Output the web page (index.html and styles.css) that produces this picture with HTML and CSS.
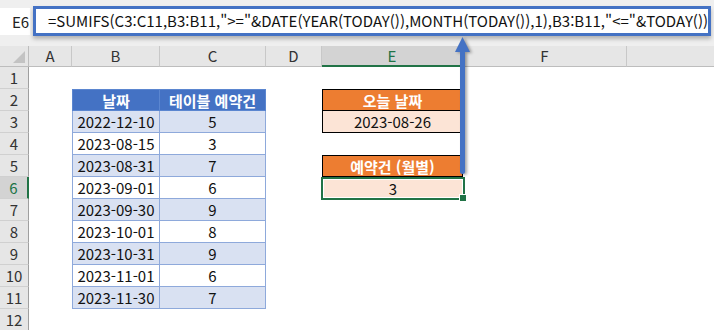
FILE: index.html
```html
<!DOCTYPE html>
<html lang="ko">
<head>
<meta charset="utf-8">
<link rel="stylesheet" href="styles.css">
</head>
<body>
<div class="app">
  <div class="fbar">
    <div class="namebox">E6</div>
    <div class="formula">=SUMIFS(C3:C11,B3:B11,"&gt;="&amp;DATE(YEAR(TODAY()),MONTH(TODAY()),1),B3:B11,"&lt;="&amp;TODAY())</div>
  </div>
  <div class="sheet">
    <div class="corner"></div>
    <div class="ch">A</div><div class="ch">B</div><div class="ch">C</div><div class="ch">D</div><div class="ch sel">E</div><div class="ch">F</div><div class="ch last"></div>

    <div class="rh">1</div><div></div><div></div><div></div><div></div><div></div><div></div><div></div>

    <div class="rh">2</div><div></div><div class="c th first">날짜</div><div class="c th">테이블 예약건</div><div></div><div class="c oh">오늘 날짜</div><div></div><div></div>

    <div class="rh">3</div><div></div><div class="c band first">2022-12-10</div><div class="c band">5</div><div></div><div class="c ov">2023-08-26</div><div></div><div></div>

    <div class="rh">4</div><div></div><div class="c first">2023-08-15</div><div class="c">3</div><div></div><div></div><div></div><div></div>

    <div class="rh">5</div><div></div><div class="c band first">2023-08-31</div><div class="c band">7</div><div></div><div class="c oh">예약건 (월별)</div><div></div><div></div>

    <div class="rh sel">6</div><div></div><div class="c first">2023-09-01</div><div class="c">6</div><div></div><div class="c ov active">3</div><div></div><div></div>

    <div class="rh">7</div><div></div><div class="c band first">2023-09-30</div><div class="c band">9</div><div></div><div></div><div></div><div></div>

    <div class="rh">8</div><div></div><div class="c first">2023-10-01</div><div class="c">8</div><div></div><div></div><div></div><div></div>

    <div class="rh">9</div><div></div><div class="c band first">2023-10-31</div><div class="c band">9</div><div></div><div></div><div></div><div></div>

    <div class="rh">10</div><div></div><div class="c first">2023-11-01</div><div class="c">6</div><div></div><div></div><div></div><div></div>

    <div class="rh">11</div><div></div><div class="c band first">2023-11-30</div><div class="c band">7</div><div></div><div></div><div></div><div></div>

    <div class="rh">12</div><div></div><div></div><div></div><div></div><div></div><div></div><div></div>
  </div>
  <svg class="arrow" width="30" height="150" viewBox="0 0 30 150">
    <rect x="10" y="14" width="5" height="124" rx="2.5" fill="#4472c4"/>
    <polygon points="12.5,1 5,16 20,16" fill="#4472c4"/>
  </svg>
</div>
</body>
</html>
```

FILE: styles.css
```css
* { box-sizing: border-box; }
html, body { margin: 0; padding: 0; background: #fff; }
body {
  width: 714px;
  height: 330px;
  overflow: hidden;
  font-family: "Noto Sans CJK KR", "Noto Sans", sans-serif;
  color: #000;
}
.app { position: relative; width: 714px; height: 330px; overflow: hidden; }

.fbar {
  height: 46px;
  background: #efefef;
  display: flex;
  align-items: flex-start;
  padding-top: 6px;
}
.namebox {
  width: 30px;
  height: 27px;
  margin-top: 2px;
  background: #fff;
  font-size: 15px;
  line-height: 27px;
  padding-left: 12px;
  color: #222;
  white-space: nowrap;
}
.formula {
  margin-left: 3px;
  width: 678px;
  height: 30px;
  border: 3px solid #4472c4;
  background: #fff;
  box-shadow: 0 3px 4px rgba(0,0,0,0.25);
  font-size: 15px;
  line-height: 24px;
  padding-left: 12px;
  white-space: nowrap;
  overflow: hidden;
  color: #111;
  letter-spacing: 0;
}

.sheet {
  display: grid;
  grid-template-columns: 29px 43px 88px 106px 56px 141px 164px 1fr;
  grid-template-rows: 21px repeat(12, 22px);
  font-size: 15px;
}
.corner {
  background: #e6e6e6;
  border-right: 1px solid #bdbdbd;
  border-bottom: 1px solid #bdbdbd;
  position: relative;
}
.corner::after {
  content: "";
  position: absolute;
  right: 3px;
  bottom: 3px;
  width: 0; height: 0;
  border-left: 12px solid transparent;
  border-bottom: 12px solid #c3c3c3;
}
.ch {
  background: #e6e6e6;
  border-right: 1px solid #c8c8c8;
  border-bottom: 1px solid #bdbdbd;
  text-align: center;
  line-height: 20px;
  color: #333;
}
.ch.last { border-right: none; }
.ch.sel {
  background: #d3d3d3;
  border-bottom: 2px solid #217346;
  color: #217346;
}
.rh {
  background: #e6e6e6;
  border-right: 1px solid #9f9f9f;
  border-bottom: 1px solid #d0d0d0;
  text-align: center;
  line-height: 22px;
  color: #333;
}
.rh.sel {
  background: #d3d3d3;
  border-right: 2px solid #217346;
  color: #217346;
}

.c {
  text-align: center;
  line-height: 21px;
  white-space: nowrap;
  border-right: 1px solid #8ea9db;
  border-bottom: 1px solid #8ea9db;
  color: #111;
}
.c.first { border-left: 1px solid #8ea9db; }
.c.th {
  background: #4472c4;
  color: #fff;
  font-weight: bold;
  border-top: 1px solid #8ea9db;
  border-color: #5b86d0;
}
.c.band { background: #d9e1f2; }

.c.oh {
  background: #ed7d31;
  color: #fff;
  font-weight: bold;
  border: 1px solid #000;
}
.c.ov {
  background: #fce4d6;
  border: 1px solid #000;
  border-top: none;
}
.c.active {
  position: relative;
  border: 2px solid #217346;
  margin: 0 -2px -1px -1px;
  box-shadow: inset 0 0 0 1px #fff;
  line-height: 19px;
}
.c.active::after {
  content: "";
  position: absolute;
  right: -4px;
  bottom: -4px;
  width: 6px;
  height: 6px;
  background: #217346;
  border: 1px solid #fff;
}

.arrow {
  position: absolute;
  left: 450px;
  top: 36px;
  filter: drop-shadow(2px 1px 1.5px rgba(0,0,0,0.35));
}
```
